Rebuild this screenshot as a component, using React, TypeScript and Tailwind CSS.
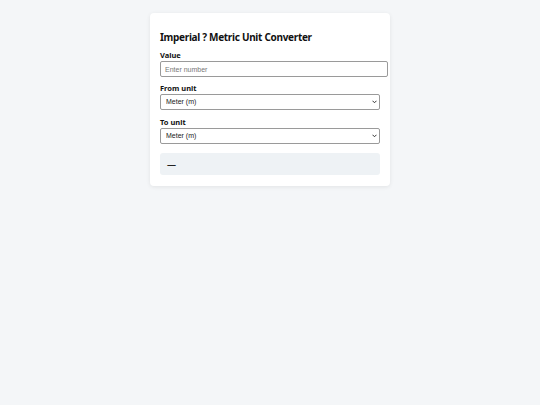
const sans = { fontFamily: '"Liberation Sans", Arial, sans-serif' };

function UnitSelect() {
  return (
    <div className="relative">
      <select
        className="block h-[16px] w-full appearance-none rounded-[2px] border border-[#9a9a9a] bg-white pl-[5px] pr-[12px] text-[7px] text-[#222]"
        style={sans}
      >
        <option>Meter (m)</option>
      </select>
      <svg className="pointer-events-none absolute right-[3px] top-[6px] h-[4px] w-[5px]" viewBox="0 0 10 7" fill="none">
        <path d="M1 1l4 4 4-4" stroke="#333" strokeWidth="2" />
      </svg>
    </div>
  );
}

export default function App() {
  return (
    <div className="min-h-[405px] w-full bg-[#f4f6f8] pt-[13px]" style={{ fontFamily: '"Noto Sans", sans-serif' }}>
      <div className="mx-auto w-[240px] rounded-[4px] bg-white px-[10px] pb-[11px] pt-[17px] shadow-[0_1px_4px_rgba(0,0,0,0.08)]">
        <h1 className="text-[10px] font-bold leading-[14px] tracking-[-0.3px] text-[#111]">Imperial ? Metric Unit Converter</h1>
        <label className="mt-[5px] block text-[7.5px] font-bold leading-[12px] text-[#111]">Value</label>
        <input
          placeholder="Enter number"
          className="block h-[16px] w-[228px] rounded-[2px] border border-[#9a9a9a] px-[4px] text-[7px] placeholder:text-[#777]"
          style={sans}
        />
        <label className="mt-[5px] block text-[7.5px] font-bold leading-[12px] text-[#111]">From unit</label>
        <UnitSelect />
        <label className="mt-[6px] block text-[7.5px] font-bold leading-[12px] text-[#111]">To unit</label>
        <UnitSelect />
        <div className="mt-[9px] flex h-[22px] items-center rounded-[3px] bg-[#eef2f5] px-[7px] pt-[2px] text-[9px] font-semibold text-[#222]">—</div>
      </div>
    </div>
  );
}
